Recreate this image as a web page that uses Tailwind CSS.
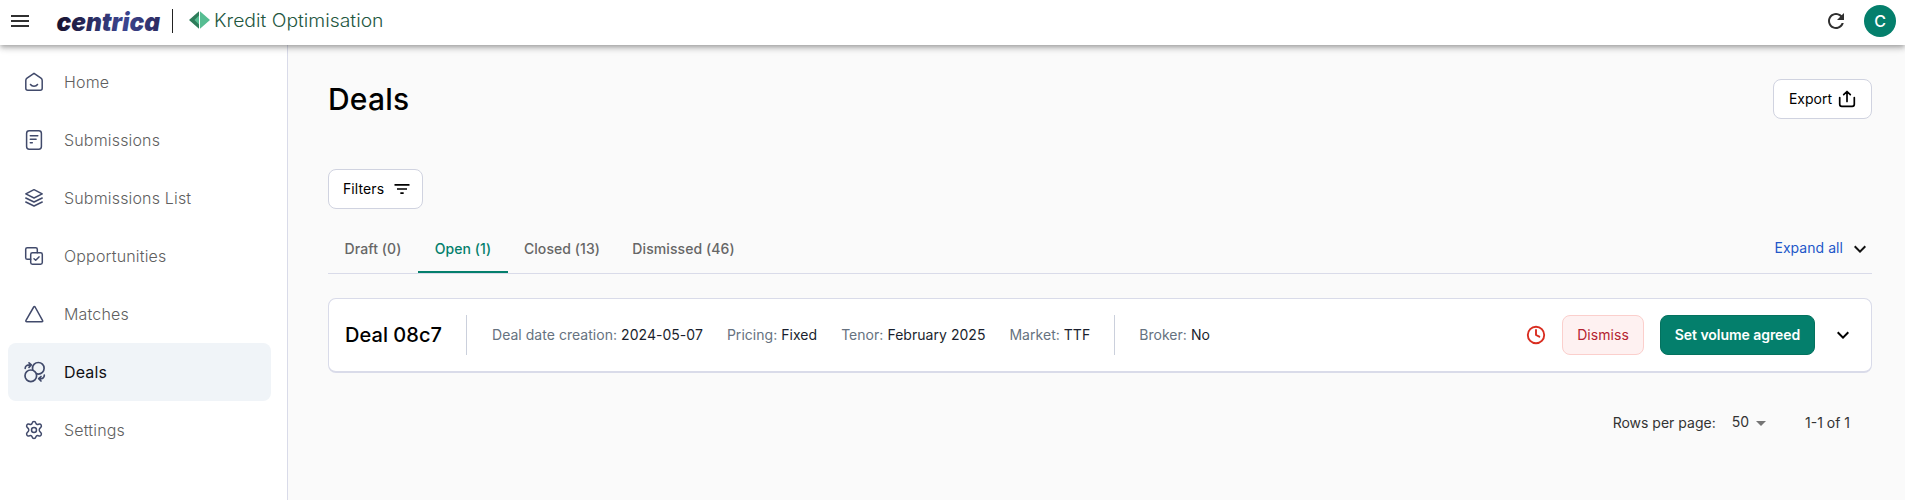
<!DOCTYPE html>
<html lang="en">
<head>
    <meta charset="UTF-8">
    <meta name="viewport" content="width=device-width, initial-scale=1.0">
    <title>Deals - Kredit Optimisation</title>
    <script src="https://cdn.jsdelivr.net/npm/@tailwindcss/browser@4"></script>
    <style>
        body {
            font-family: 'Inter', sans-serif;
        }
    </style>
</head>
<body class="bg-[#fafafa] h-screen overflow-hidden flex flex-col text-black text-sm">
    <header class="relative z-10 h-[45px] shrink-0 bg-white flex items-center shadow-[0_2px_4px_-1px_rgba(0,0,0,0.2),0_4px_5px_0_rgba(0,0,0,0.14),0_1px_10px_0_rgba(0,0,0,0.12)]">
        <button class="ml-2 w-6 h-[42px] -mt-[3px] flex items-center justify-center">
            <svg class="w-6 h-6 shrink-0" viewBox="0 0 24 24" fill="#303030"><path d="M3 18h18v-2H3v2zm0-5h18v-2H3v2zm0-7v2h18V6H3z"/></svg>
        </button>
        <svg class="ml-6 w-[110px] h-[45px] shrink-0" viewBox="0 0 110 45">
            <defs>
                <linearGradient id="brand" x1="0" y1="0" x2="1" y2="0">
                    <stop offset="0" stop-color="#17122f"/>
                    <stop offset="0.65" stop-color="#3c4590"/>
                    <stop offset="1" stop-color="#2c2b60"/>
                </linearGradient>
            </defs>
            <text x="0.500" y="30.500" font-size="25.500" font-weight="900" font-style="italic" textLength="103.500" lengthAdjust="spacingAndGlyphs" fill="url(#brand)">centrica</text>
        </svg>
        <div class="ml-1.5 -mt-[3px] w-px h-6 bg-[#222]"></div>
        <svg class="ml-4 w-[200px] h-[45px] shrink-0" viewBox="0 0 200 45">
            <path d="M0 20 10 11.300v17.400z" fill="#2d7d5a"/>
            <path d="M11 11.300l10 8.700-10 8.700z" fill="#56bd92"/>
            <path d="M10 15.500v9L5.500 20z" fill="#56bd92"/>
            <text x="25" y="26.500" font-size="18" font-weight="300" textLength="169.500" lengthAdjust="spacingAndGlyphs" fill="#23573f">Kredit Optimisation</text>
        </svg>
        <button class="ml-auto mr-4 -mt-[3px]">
            <svg class="w-6 h-6" viewBox="0 0 24 24" fill="#303030"><path d="M17.650 6.350C16.200 4.900 14.210 4 12 4c-4.420 0-7.990 3.580-7.990 8s3.570 8 7.990 8c3.730 0 6.840-2.550 7.730-6h-2.080c-.820 2.330-3.040 4-5.650 4-3.310 0-6-2.690-6-6s2.690-6 6-6c1.660 0 3.140.690 4.220 1.780L13 11h7V4l-2.350 2.350z"/></svg>
        </button>
        <div class="mr-[9px] -mt-[3px] w-8 h-8 rounded-full bg-[#047f6c] text-white text-base font-medium flex items-center justify-center">C</div>
    </header>

    <div class="flex flex-1 min-h-0">
        <nav class="w-[288px] shrink-0 bg-white border-r border-[#d9dbe9] pt-2 pl-2 pr-4 text-base font-light tracking-[0.17px] text-[#5f5f5f]">
            <a class="flex items-center h-[58px] pl-4 rounded-lg">
                <svg class="w-5 h-5 mr-5" viewBox="0 0 20 20" fill="none" stroke="#414a6b" stroke-width="1.500" stroke-linecap="round" stroke-linejoin="round"><path d="M10 1.300 17 6.200q1.200.9 1.200 2.300v7.700q0 2-2 2H3.800q-2 0-2-2V8.500Q1.800 7.100 3 6.200zM6.500 12.500c1.500 2.300 5.500 2.300 7 0"/></svg>
                Home
            </a>
            <a class="flex items-center h-[58px] pl-4 rounded-lg">
                <svg class="w-5 h-5 mr-5" viewBox="0 0 20 20" fill="none" stroke="#414a6b" stroke-width="1.500" stroke-linecap="round" stroke-linejoin="round"><rect x="2.600" y=".8" width="14.800" height="18.400" rx="2.600"/><path d="M6.300 5.700h7.500M6.300 9.200h5.800M6.300 12.700h2"/></svg>
                Submissions
            </a>
            <a class="flex items-center h-[58px] pl-4 rounded-lg">
                <svg class="w-5 h-5 mr-5" viewBox="0 0 20 20" fill="none" stroke="#414a6b" stroke-width="1.500" stroke-linecap="round" stroke-linejoin="round"><path d="M10 1.700 18.200 5.900 10 10 1.800 5.900zM1.800 10 10 14l8.200-4M1.800 14 10 18l8.200-4"/></svg>
                Submissions List
            </a>
            <a class="flex items-center h-[58px] pl-4 rounded-lg">
                <svg class="w-5 h-5 mr-5" viewBox="0 0 20 20" fill="none" stroke="#414a6b" stroke-width="1.500" stroke-linecap="round" stroke-linejoin="round"><path d="M6.700 13.300H3.300q-1.600 0-1.600-1.600V3.300q0-1.600 1.600-1.600h8.400q1.600 0 1.600 1.600v3.400"/><rect x="6.700" y="6.700" width="11.600" height="11.600" rx="1.700"/><path d="m10 12.700 1.700 1.600 3.300-3.400"/></svg>
                Opportunities
            </a>
            <a class="flex items-center h-[58px] pl-4 rounded-lg">
                <svg class="w-5 h-5 mr-5" viewBox="0 0 20 20" fill="none" stroke="#414a6b" stroke-width="1.500" stroke-linejoin="round"><path d="M9.700 3 2 16.300q-.6 1.400.8 1.400h15q1.400 0 .7-1.400L11.100 3q-.7-1.100-1.400 0z"/></svg>
                Matches
            </a>
            <a class="flex items-center h-[58px] pl-4 rounded-lg bg-[#f0f4f8] text-[#101014] font-normal">
                <svg class="w-[22px] h-[22px] mr-[18px]" viewBox="0 0 22 22" fill="none" stroke="#414a6b" stroke-width="1.700" stroke-linecap="round" stroke-linejoin="round"><circle cx="14.300" cy="7.300" r="5.800"/><circle cx="6.800" cy="14.800" r="5.800" fill="#f0f4f8"/><path d="M1.200 7.300C1.200 5 3 3.700 6.500 3.900M5 1.800l2.300 2.100L5 6.300M20.300 14.200c0 2.600-1.800 3.700-4.800 3.500M17 15.500l-2.300 2.200L17 20"/></svg>
                Deals
            </a>
            <a class="flex items-center h-[58px] pl-4 rounded-lg">
                <svg class="w-5 h-5 mr-5" viewBox="0 0 20 20" fill="none" stroke="#414a6b" stroke-width="1.500" stroke-linejoin="round"><path d="M8.200 2.900Q8.500 1.500 10 1.500t1.800 1.400Q12.500 5 14.500 4.200q1.800-.6 2.600.7t-.3 2.500Q15.200 8.800 15.200 10t1.600 2.600q1.100 1.200.3 2.500t-2.600.7q-2-.8-2.700 1.300Q11.500 18.500 10 18.500t-1.800-1.400Q7.500 15 5.500 15.800q-1.800.6-2.600-.7t.3-2.500Q4.800 11.200 4.800 10T3.200 7.400Q2.100 6.200 2.900 4.900t2.600-.7q2 .8 2.700-1.300z"/><circle cx="10" cy="10" r="2.500"/></svg>
                Settings
            </a>
        </nav>

        <main class="flex-1 px-10 pr-[33px] pt-[34px]">
            <div class="flex items-center justify-between h-10">
                <h1 class="text-[30px] font-medium tracking-[0.2px]">Deals</h1>
                <button class="h-10 w-[99px] bg-white border border-[#d0d3e0] rounded-lg flex items-center justify-center gap-1.5">
                    Export
                    <svg class="w-[18px] h-[18px]" viewBox="0 0 18 18" fill="none" stroke="#000" stroke-width="1.700" stroke-linecap="round" stroke-linejoin="round"><path d="M1.700 7.500v6.800q0 2 2 2h10.600q2 0 2-2V7.500M9 11.500V2M5.700 4.700 9 1.500l3.300 3.200"/></svg>
                </button>
            </div>

            <button class="mt-[50px] h-10 w-[95px] pl-[14px] bg-white border border-[#d0d3e0] rounded-lg flex items-center gap-2 tracking-[0.1px]">
                Filters
                <svg class="w-5 h-5" viewBox="0 0 24 24" fill="#000"><path d="M10 18h4v-2h-4v2zM3 6v2h18V6H3zm3 7h12v-2H6v2z"/></svg>
            </button>

            <div class="mt-4 h-[49px] border-b border-[#d9dbe9] flex font-medium tracking-[0.08px] text-[#666]">
                <div class="w-[90px] flex items-center justify-center">Draft (0)</div>
                <div class="w-[90px] flex items-center justify-center text-[#047f6c] border-b-2 border-[#047f6c] pt-0.5">Open (1)</div>
                <div class="w-[108px] flex items-center justify-center">Closed (13)</div>
                <div class="w-[134px] pl-px flex items-center justify-center">Dismissed (46)</div>
                <button class="ml-auto flex items-center pb-0.5 font-normal tracking-[0.05px] text-[#2257c9]">
                    Expand all
                    <svg class="ml-[5px] mt-0.5 w-6 h-6" viewBox="0 0 24 24" fill="#111"><path d="M7.410 8.590 12 13.170l4.590-4.580L18 10l-6 6-6-6 1.410-1.410z"/></svg>
                </button>
            </div>

            <div class="mt-6 h-[75px] bg-white border border-b-2 border-[#d9dbe9] rounded-lg flex items-center pl-4 pr-4 text-[#1a1f2e]">
                <h2 class="w-[121px] text-xl font-medium text-black tracking-[0.05px]">Deal 08c7</h2>
                <div class="w-px h-10 bg-[#cbd0dc]"></div>
                <div class="ml-[25px] flex gap-6 tracking-[0.035px]">
                    <p><span class="text-[#667280]">Deal date creation:</span> 2024-05-07</p>
                    <p><span class="text-[#667280]">Pricing:</span> Fixed</p>
                    <p><span class="text-[#667280]">Tenor:</span> February 2025</p>
                    <p><span class="text-[#667280]">Market:</span> TTF</p>
                </div>
                <div class="ml-6 w-px h-10 bg-[#cbd0dc]"></div>
                <p class="ml-6 tracking-[0.035px]"><span class="text-[#667280]">Broker:</span> No</p>
                <svg class="ml-auto w-5 h-5" viewBox="0 0 20 20" fill="none" stroke="#d92d20" stroke-width="1.900" stroke-linecap="round" stroke-linejoin="round"><circle cx="10" cy="10" r="8.200"/><path d="M10 5v5l3.300 1.700"/></svg>
                <button class="ml-4 w-[82px] h-10 bg-[#fef1f1] border border-[#fbcfcc] rounded-lg text-[#b42330] tracking-[0.05px]">Dismiss</button>
                <button class="ml-4 w-[155px] h-10 bg-[#047f6c] border border-[#04725f] rounded-lg text-white font-semibold tracking-[-0.05px]">Set volume agreed</button>
                <svg class="ml-4 w-6 h-6" viewBox="0 0 24 24" fill="#000"><path d="M7.410 8.590 12 13.170l4.590-4.580L18 10l-6 6-6-6 1.410-1.410z"/></svg>
            </div>

            <div class="mt-6 h-[52px] pr-[22px] flex items-center justify-end text-[#333]">
                <span>Rows per page:</span>
                <span class="ml-4 -mt-0.5">50</span>
                <svg class="w-6 h-6" viewBox="0 0 24 24" fill="#757575"><path d="m7 10 5 5 5-5z"/></svg>
                <span class="ml-8">1-1 of 1</span>
            </div>
        </main>
    </div>
</body>
</html>
